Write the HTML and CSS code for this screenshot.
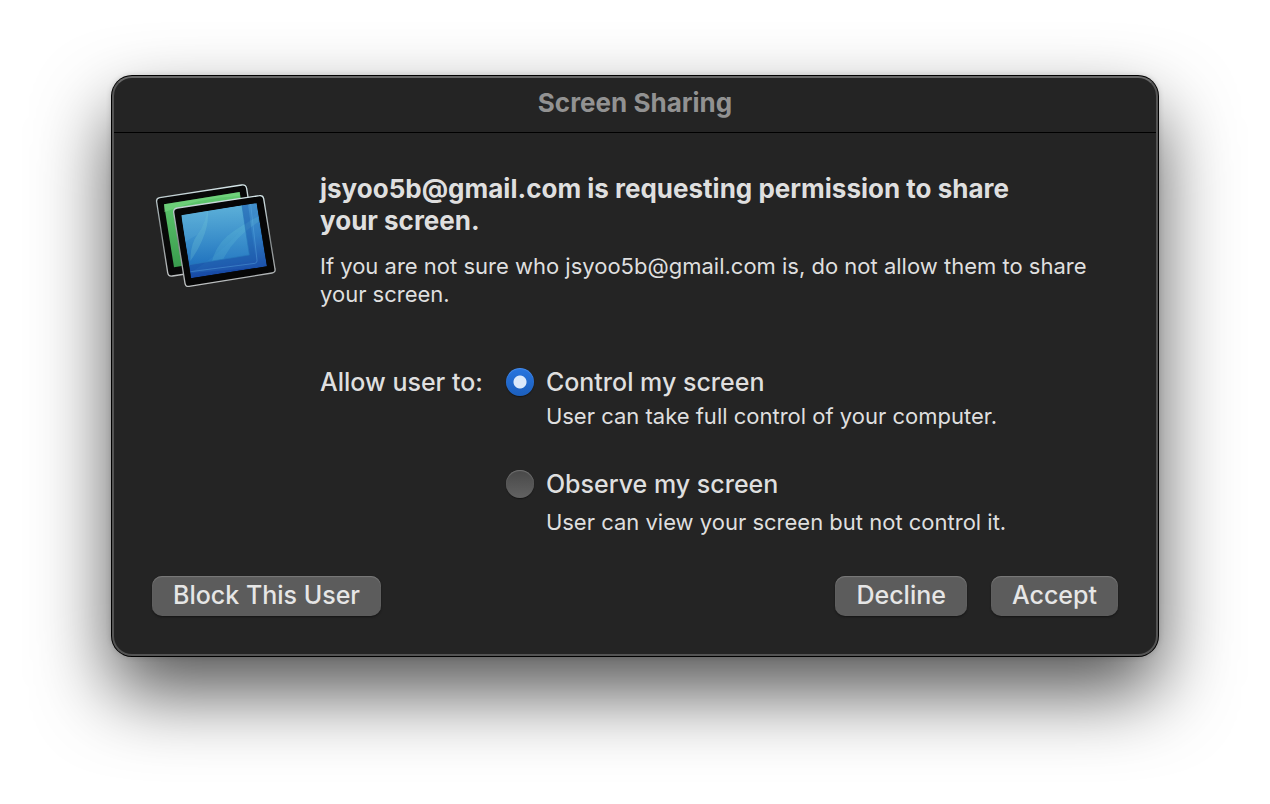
FILE: index.html
```html
<!DOCTYPE html>
<html lang="en">
<head>
<meta charset="utf-8">
<title>Screen Sharing</title>
<link rel="stylesheet" href="styles.css">
</head>
<body>
<main class="dialog">
  <header class="titlebar"><h1 class="title">Screen Sharing</h1></header>
  <form class="content">
    <svg class="app-icon" viewBox="0 0 420 375" aria-hidden="true">
      <defs>
        <linearGradient id="green" x1="0" y1="0" x2="0" y2="1"><stop offset="0" stop-color="#62cb70"/><stop offset="1" stop-color="#399c4d"/></linearGradient>
        <linearGradient id="blue" x1="0.35" y1="0" x2="0.55" y2="1"><stop offset="0" stop-color="#4a98d0"/><stop offset=".5" stop-color="#2c78c0"/><stop offset="1" stop-color="#123f9f"/></linearGradient>
        <linearGradient id="inner" x1="0" y1="0" x2="0" y2="1"><stop offset="0" stop-color="#60b5da"/><stop offset="1" stop-color="#2278c2"/></linearGradient>
        <linearGradient id="edge" x1="0" y1="0" x2="0" y2="1"><stop offset="0" stop-color="#d5e6e9"/><stop offset=".5" stop-color="#858b8d"/><stop offset="1" stop-color="#bfc2c3"/></linearGradient>
        <clipPath id="screen"><path d="M109 121 335 84 366 274 138 310Z"/></clipPath>
      </defs>
      <path d="M44 68 290 30Q303 28 305 41L338 252Q340 263 328 266L82 303Q70 305 68 293L35 81Q33 70 44 68Z" fill="#080808" stroke="url(#edge)" stroke-width="4"/>
      <path d="M57 88 284 51 314 240 87 277Z" fill="url(#green)"/>
      <path d="M57 112Q170 66 284 63L284 51 57 88Z" fill="#8de392" opacity=".35"/>
      <path d="M97 99 343 62Q354 60 356 71L390 282Q392 292 381 294L132 334Q122 336 120 325L86 112Q85 101 97 99Z" fill="#060606" stroke="url(#edge)" stroke-width="4"/>
      <g clip-path="url(#screen)">
        <path d="M109 121 335 84 366 274 138 310Z" fill="url(#blue)"/>
        <path d="M105 118 291 91 313 240 134 269Z" fill="url(#inner)" opacity=".85"/>
        <path d="M188 100Q183 145 157 179 136 207 136 258 173 206 185 155 191 130 188 100Z" fill="#8be3dd" opacity=".2"/>
        <path d="M109 121 188 106Q183 145 157 179L118 202Z" fill="#7bc9e2" opacity=".14"/>
        <path d="M201 259Q215 201 268 167 300 146 338 125L342 140Q270 184 235 252Z" fill="#74d9dd" opacity=".18"/>
        <path d="M135 294Q246 226 335 110L366 276Z" fill="#56b4e4" opacity=".1"/>
        <path d="M291 91 309 88 332 258 137 286 134 269 313 240Z" fill="#1d5faf" opacity=".42"/>
        <path d="M317 87 336 256Q337 263 330 265L137 290" fill="none" stroke="#5aaae2" stroke-width="2" opacity=".65"/>
        <path d="M291 91 313 240 134 269" fill="none" stroke="#2878bb" stroke-width="2"/>
      </g>
    </svg>
    <section class="details">
      <h2 class="heading">jsyoo5b@gmail.com is requesting permission to share your screen.</h2>
      <p class="notice">If you are not sure who jsyoo5b@gmail.com is, do not allow them to share your screen.</p>
      <div class="permissions" role="radiogroup" aria-labelledby="allow">
        <span class="group-label" id="allow">Allow user to:</span>
        <div class="options">
          <div class="option">
            <input class="radio" type="radio" name="access" id="control" aria-describedby="control-note" checked>
            <label class="option-label" for="control">Control my screen</label>
            <p class="option-note" id="control-note">User can take full control of your computer.</p>
          </div>
          <div class="option option-observe">
            <input class="radio" type="radio" name="access" id="observe" aria-describedby="observe-note">
            <label class="option-label" for="observe">Observe my screen</label>
            <p class="option-note" id="observe-note">User can view your screen but not control it.</p>
          </div>
        </div>
      </div>
    </section>
    <footer class="actions">
      <button class="button block" type="button">Block This User</button>
      <button class="button" type="button">Decline</button>
      <button class="button" type="button">Accept</button>
    </footer>
  </form>
</main>
</body>
</html>
```
FILE: styles.css
```css
* { box-sizing: border-box; }
body {
  margin: 0;
  min-height: 100vh;
  padding: 76px 112px;
  background: #fff;
  color: #dfdfdf;
  font-family: Inter, "Liberation Sans", sans-serif;
}
h1, h2, p { margin: 0; }
.dialog {
  background: #242424;
  border: 2px solid #545454;
  border-top-color: #686868;
  border-radius: 20px;
  box-shadow: 0 0 0 1px #000, 0 0 6px rgba(0, 0, 0, .2), 0 36px 76px rgba(0, 0, 0, .68);
}
.titlebar {
  padding: 9px 20px 13px;
  border-bottom: 1px solid #000;
}
.title {
  color: #929292;
  font-size: 26px;
  line-height: 32px;
  font-weight: 700;
  text-align: center;
}
.content {
  display: grid;
  grid-template-columns: 140px 1fr;
  column-gap: 35px;
  padding: 40px 38px 38px 31px;
}
.app-icon { width: 140px; height: 125px; margin-top: 2px; }
.heading {
  max-width: 740px;
  font-size: 26px;
  line-height: 32px;
  font-weight: 700;
}
.notice { margin-top: 15px; font-size: 22px; line-height: 28px; }
.permissions { display: flex; gap: 23px; margin-top: 58px; }
.group-label, .option-label {
  font-size: 25px;
  line-height: 32px;
  font-weight: 500;
  white-space: nowrap;
}
.option {
  display: grid;
  grid-template-columns: 28px 1fr;
  column-gap: 12px;
  align-items: center;
}
.option-observe { margin-top: 38px; }
.option-observe .option-note { margin-top: 8px; }
.option-note { grid-column: 2; margin-top: 4px; font-size: 22px; line-height: 28px; }
.radio {
  appearance: none;
  width: 28px;
  height: 28px;
  margin: 0;
  border-radius: 50%;
  background: linear-gradient(#484848, #626262);
  box-shadow: inset 0 1px 1px #737373, 0 1px 1px #161616;
}
.radio:checked {
  background: radial-gradient(circle, #dce9fb 0 6px, transparent 7px), linear-gradient(#2875df, #1c5fbd);
  box-shadow: inset 0 1px 1px #4b8eea, 0 1px 1px #161616;
}
.actions {
  grid-column: 1 / -1;
  display: flex;
  gap: 24px;
  margin-top: 40px;
  padding-left: 7px;
}
.button {
  height: 40px;
  padding: 0 21px 2px;
  border: 0;
  border-radius: 10px;
  background: #5c5c5c;
  box-shadow: inset 0 1px 1px #7a7a7a, 0 1px 2px #151515;
  color: #e6e6e6;
  font: 500 25px/32px Inter, "Liberation Sans", sans-serif;
}
.block { margin-right: auto; }
```
